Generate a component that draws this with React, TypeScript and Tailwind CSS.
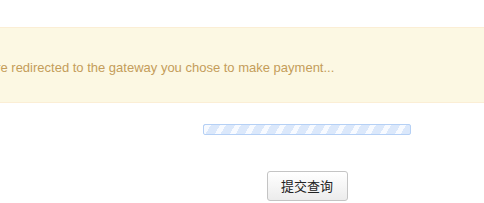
export default function App() {
  return (
    <div className="w-[484px] h-[203px] overflow-hidden bg-white font-['Liberation_Sans',Arial,sans-serif]">
      <div className="h-[27px]" />
      <div className="h-[76px] bg-[#fcf8e3] border-y border-[#fbeed5] flex items-center">
        <p className="ml-[-139px] mt-[5px] whitespace-nowrap text-[13px] text-[#c49d5a]">
          Please wait while you are redirected to the gateway you chose to make payment...
        </p>
      </div>
      <div className="w-[614px] flex flex-col items-center">
        <div className="mt-[21px] w-[208px] h-[11px] rounded-[2px] border border-[#b5d0f5] bg-[repeating-linear-gradient(-60deg,#dbe8fb_0px,#dbe8fb_8px,#f7faff_8px,#f7faff_13px)]" />
        <button className="mt-[36px] w-[81px] h-[30px] rounded-[3px] border border-[#c4c4c4] bg-gradient-to-b from-white to-[#ececec] text-[13px] text-[#222] font-['Noto_Sans_CJK_SC',sans-serif]">
          提交查询
        </button>
      </div>
    </div>
  );
}
